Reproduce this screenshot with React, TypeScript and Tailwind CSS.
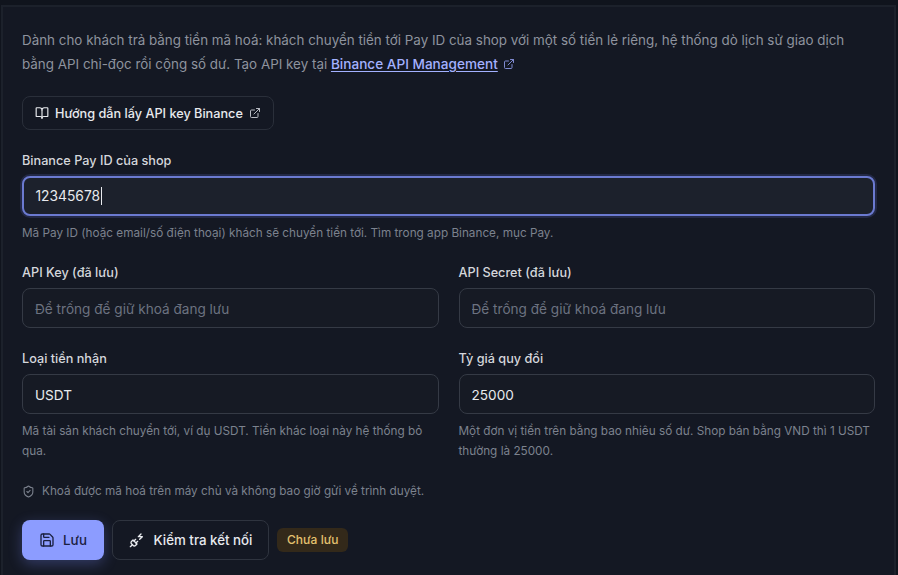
import { BookOpen, ExternalLink, Save, PlugZap, ShieldCheck } from "lucide-react";

const font = { fontFamily: "Inter, sans-serif" };

function Field({ label, value, placeholder, hint }: { label: string; value?: string; placeholder?: string; hint?: string }) {
  return (
    <div className="flex flex-col min-w-0">
      <label className="text-[12.7px] leading-5 font-medium text-[#d5d7dc] mb-[5px]">{label}</label>
      <input
        readOnly
        value={value ?? ""}
        placeholder={placeholder}
        className="w-full h-10 rounded-[8px] border border-[#353a45] bg-[#161a24] px-[12px] pt-[1px] text-[13.6px] text-[#e8eaee] placeholder:text-[#6c7280] outline-none"
      />
      {hint && <p className="mt-[7px] text-[11.75px] leading-5 text-[#7c828e]">{hint}</p>}
    </div>
  );
}

export default function App() {
  return (
    <div style={font} className="h-[575px] w-[898px] overflow-hidden bg-[#10141d]">
      <div className="ml-[1px] mr-[2px] mt-[5px] h-[600px] border-t-2 border-x-2 border-[#1c212b] bg-[#141823] pl-[19px] pr-[19px] pt-[21px]">
        <p className="text-[13.4px] leading-6 text-[#8e939e]">
          Dành cho khách trả bằng tiền mã hoá: khách chuyển tiền tới Pay ID của shop với một số tiền lẻ riêng, hệ thống dò lịch sử giao dịch bằng API chỉ-đọc rồi cộng số dư. Tạo API key tại{" "}
          <a className="text-[13.6px] font-medium text-[#a3b1ff] underline underline-offset-2">Binance API Management</a>
          <ExternalLink className="inline-block ml-[5px] mb-[3px] w-3 h-3 text-[#7f8ad0]" />
        </p>

        <div className="mt-[20px] inline-flex h-[34px] items-center gap-[6px] rounded-[8px] border border-[#2a2f3a] bg-[#141823] px-[12px] text-[12.7px] font-medium text-[#e8eaee]">
          <BookOpen className="w-[14px] h-[14px]" />
          <span className="pt-[1px]">Hướng dẫn lấy API key Binance</span>
          <ExternalLink className="w-3 h-3 text-[#b9bcc4]" />
        </div>

        <div className="mt-[21px]">
          <label className="block text-[12.7px] leading-5 font-medium text-[#d5d7dc] mb-[5px]">Binance Pay ID của shop</label>
          <div className="flex h-10 items-center rounded-[8px] border-2 border-[#6b7ad0] bg-[#1c212c] px-[11.5px] text-[13.8px] text-[#e8eaee] shadow-[0_0_0_2px_#232946]">
            12345678<span className="ml-[0.5px] h-[18px] w-px bg-[#e8eaee]" />
          </div>
          <p className="mt-[7px] text-[11.75px] leading-5 text-[#7c828e]">Mã Pay ID (hoặc email/số điện thoại) khách sẽ chuyển tiền tới. Tìm trong app Binance, mục Pay.</p>
        </div>

        <div className="mt-[20px] grid grid-cols-2 gap-x-[20px] gap-y-[21px]">
          <Field label="API Key (đã lưu)" placeholder="Để trống để giữ khoá đang lưu" />
          <Field label="API Secret (đã lưu)" placeholder="Để trống để giữ khoá đang lưu" />
          <Field label="Loại tiền nhận" value="USDT" hint="Mã tài sản khách chuyển tới, ví dụ USDT. Tiền khác loại này hệ thống bỏ qua." />
          <Field label="Tỷ giá quy đổi" value="25000" hint="Một đơn vị tiền trên bằng bao nhiêu số dư. Shop bán bằng VND thì 1 USDT thường là 25000." />
        </div>

        <div className="mt-[20px] flex items-center gap-[7px] text-[11.75px] leading-5 text-[#7c828e]">
          <ShieldCheck className="w-[13px] h-[13px]" />
          <span>Khoá được mã hoá trên máy chủ và không bao giờ gửi về trình duyệt.</span>
        </div>

        <div className="mt-[19px] flex items-center gap-[8px]">
          <button className="flex h-10 w-[82px] items-center justify-center gap-[8px] rounded-[8px] bg-[#8c9cff] text-[13.3px] font-medium text-[#1a2040] shadow-[0_4px_14px_rgba(124,140,255,0.3)]">
            <Save className="w-4 h-4" />
            <span className="pt-[1px]">Lưu</span>
          </button>
          <button className="flex h-10 w-[157px] items-center justify-center gap-[9px] rounded-[8px] border border-[#2f343f] bg-[#141823] text-[13.3px] font-medium text-[#e8eaee]">
            <PlugZap className="w-4 h-4" />
            <span className="pt-[1px]">Kiểm tra kết nối</span>
          </button>
          <span className="flex h-6 items-center rounded-[6px] bg-[#33291a] px-[10px] text-[12px] font-medium text-[#e3c16f]">Chưa lưu</span>
        </div>
      </div>
    </div>
  );
}
